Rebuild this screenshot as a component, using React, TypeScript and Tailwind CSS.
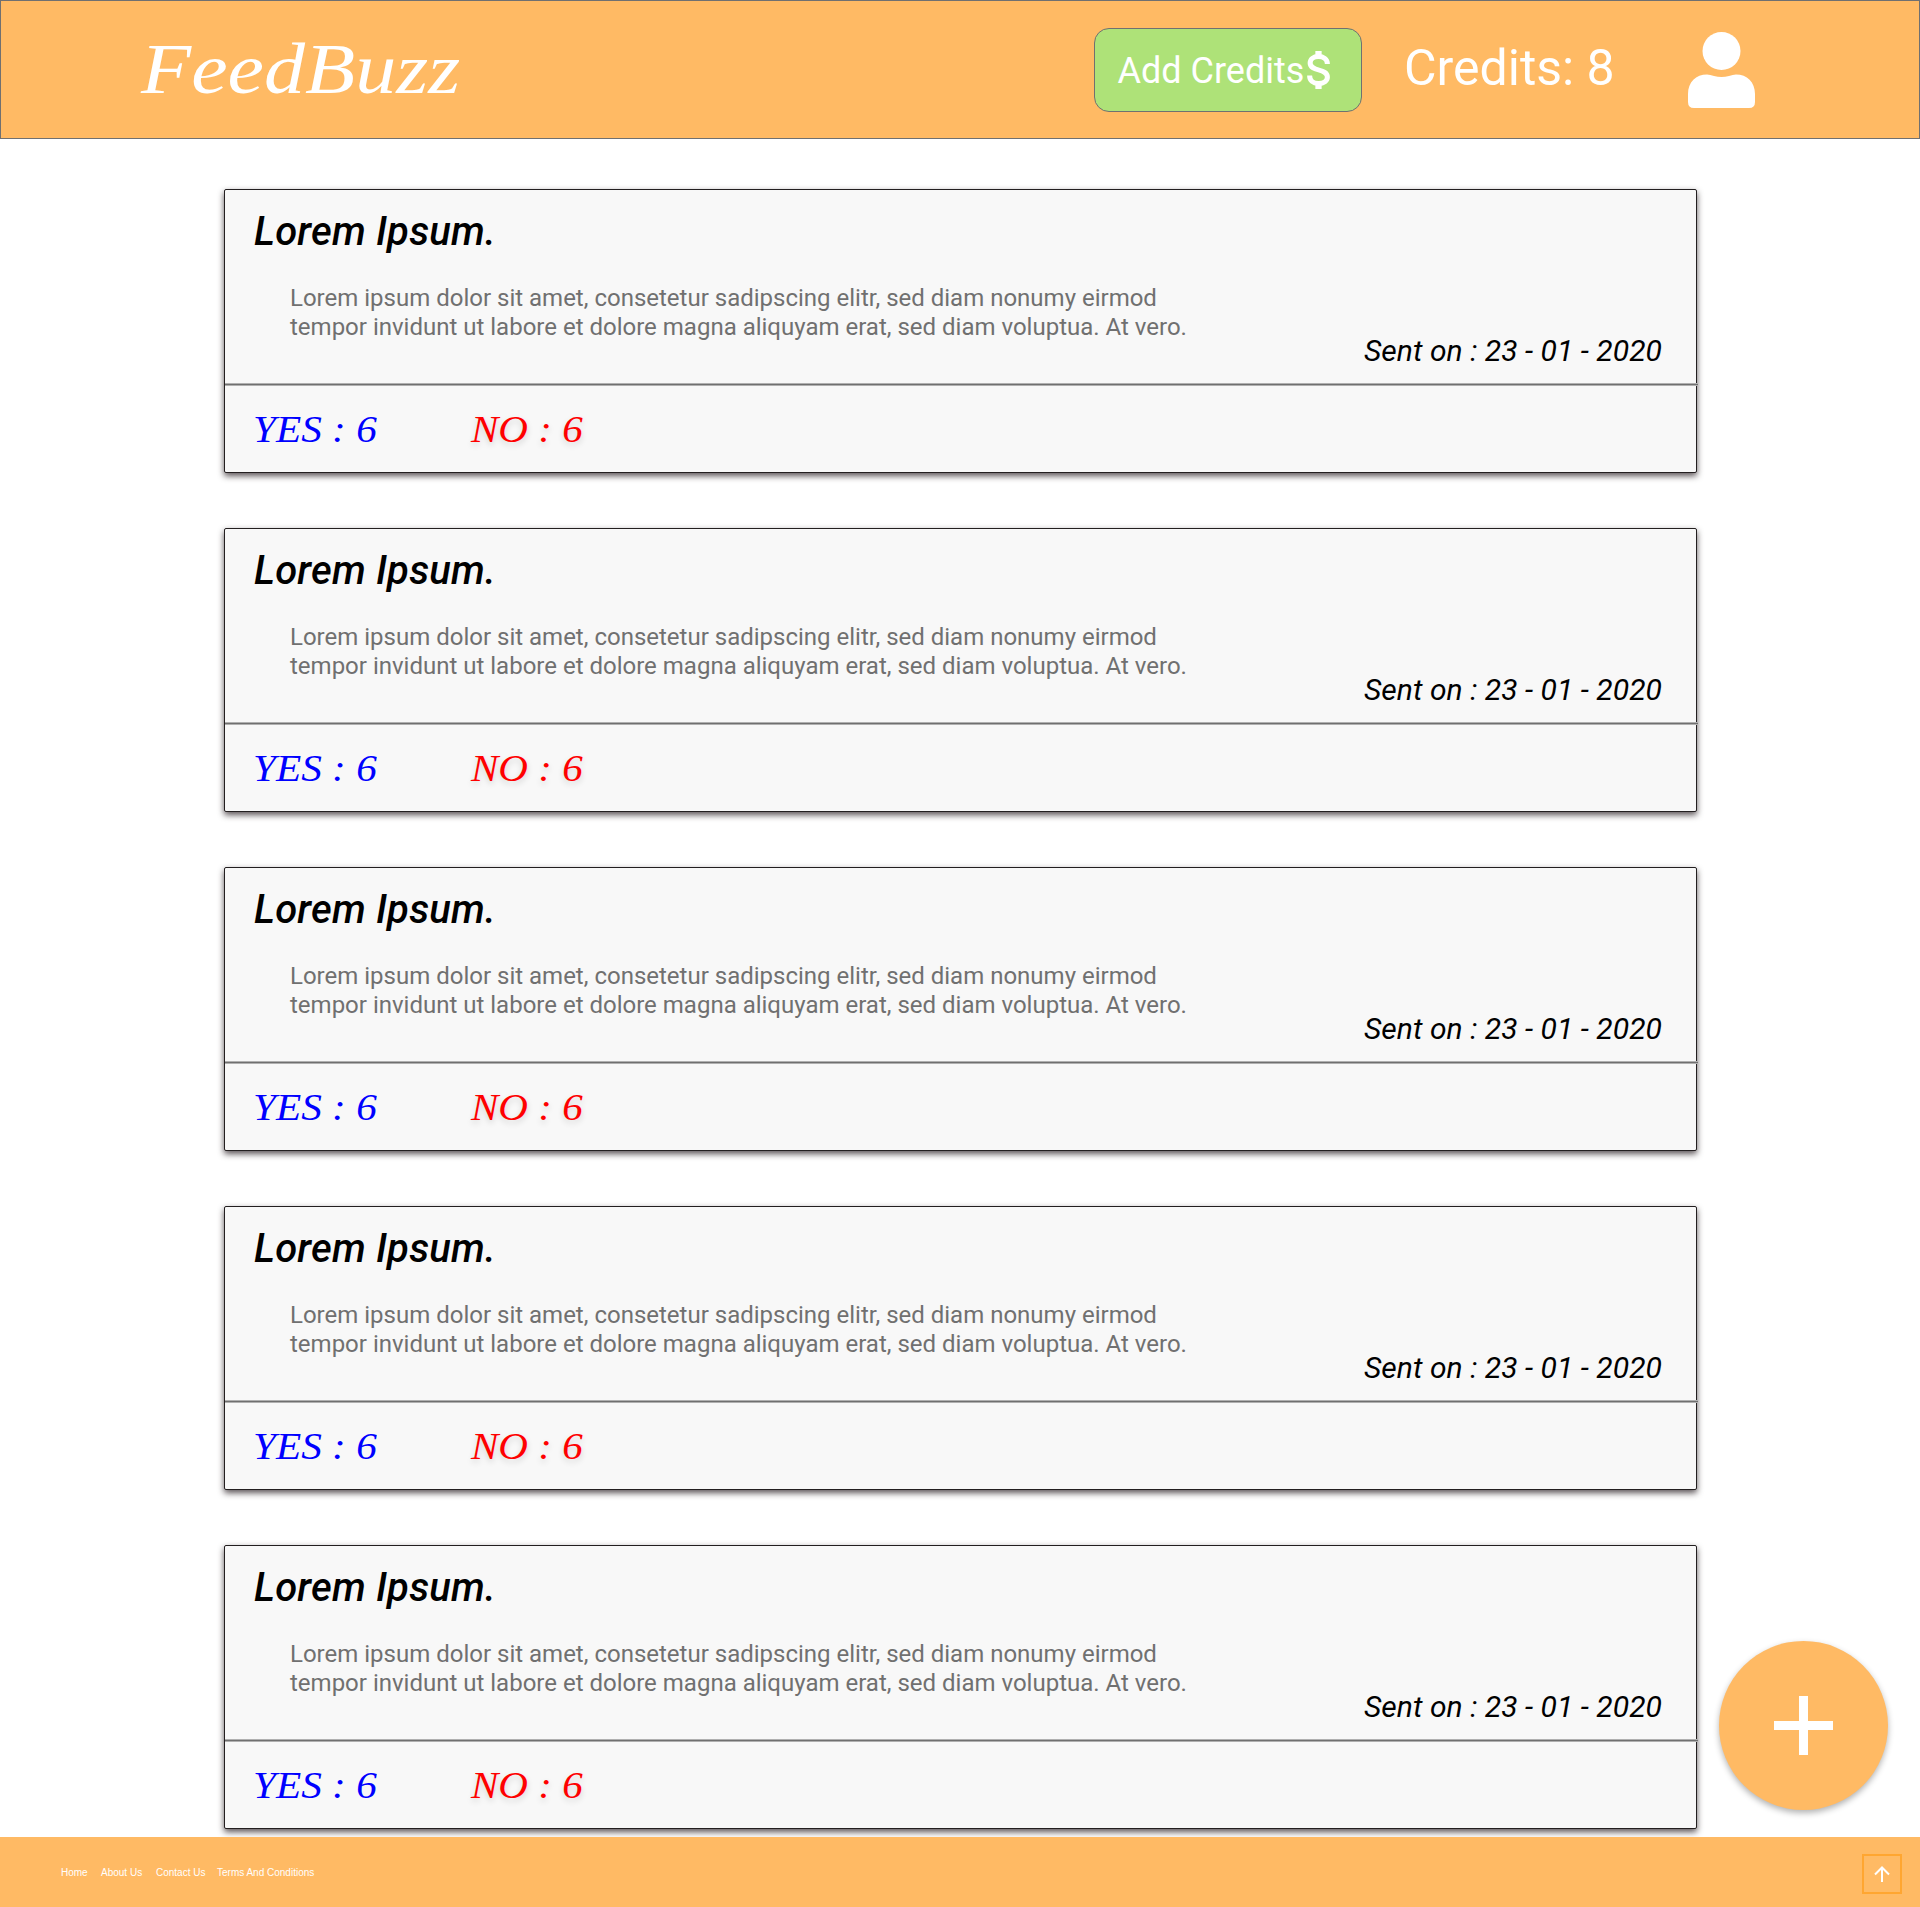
const cards = [0, 1, 2, 3, 4];

function Card() {
  return (
    <article className="relative h-[284px] w-[1473px] rounded-[2px] border border-[#231f20] bg-[#f8f8f8] shadow-[0_3px_6px_rgba(35,25,30,0.75)]">
      <div className="flex h-[197px] flex-col">
        <h2 className="mt-[18px] ml-[29px] text-[40px] leading-[47px] font-medium tracking-[0.2px] italic text-black">Lorem Ipsum.</h2>
        <p className="mt-[29px] ml-[65px] text-[24px] leading-[29px] whitespace-nowrap text-[#707070]">
          Lorem ipsum dolor sit amet, consetetur sadipscing elitr, sed diam nonumy eirmod
          <br />
          tempor invidunt ut labore et dolore magna aliquyam erat, sed diam voluptua. At vero.
        </p>
        <p className="-mt-[9px] mr-[34px] self-end text-[30px] leading-[36px] tracking-[0.06px] whitespace-nowrap italic text-black">Sent on : 23 - 01 - 2020</p>
      </div>
      <div className="-mt-[4px] -mr-[2px] h-[3px] border-y border-[#b0b0b0] bg-[#707070]" />
      <div className="flex pt-[21px] pl-[28px] text-[38px] leading-[44px] whitespace-nowrap italic [font-family:'Liberation_Serif',serif]">
        <div className="w-[218px]">
          <span className="inline-block origin-left scale-x-[1.086] text-[#0000ff]">YES : 6</span>
        </div>
        <span className="inline-block origin-left scale-x-[1.08] text-[#ff0000] [text-shadow:0_3px_6px_rgba(0,0,0,0.16)]">NO : 6</span>
      </div>
    </article>
  );
}

export default function App() {
  return (
    <div className="relative flex h-[1907px] w-[1920px] flex-col overflow-hidden bg-white [font-family:Roboto,sans-serif]">
      <header className="flex h-[139px] shrink-0 items-start border border-[#707070] bg-[#ffba64] text-white">
        <h1 className="mt-[27px] ml-[140px] w-[952.5px] text-[72px] leading-[82px] italic [font-family:'Liberation_Serif',serif]">
          <span className="inline-block origin-left scale-x-[1.14]">FeedBuzz</span>
        </h1>
        <button className="mt-[27px] flex h-[84px] w-[268px] shrink-0 rounded-[15px] border border-[#707070] bg-[#aee278] pl-[23px] text-[36px]">
          <span className="mt-[20px] leading-[44px]">Add Credits</span>
          <svg className="mt-[22px] ml-[3px] h-[38px] w-[23px]" viewBox="0 0 22 38" fill="none" stroke="currentColor" preserveAspectRatio="none">
            <path d="M11 0v7M11 31v7" strokeWidth="6" />
            <path d="M19.500 13c0-5-4-7.500-8.500-7.500-5 0-8 2.500-8 6.500 0 9 16.500 5 16.500 14 0 4-3.500 6.500-8.500 6.500S2.500 30 2.500 24.500" strokeWidth="4.800" />
          </svg>
        </button>
        <span className="mt-[37px] ml-[42.5px] w-[284px] text-[50px] leading-[60px] whitespace-nowrap">Credits: 8</span>
        <svg className="mt-[31px] h-[76px] w-[67px]" viewBox="0 0 67 76" fill="currentColor">
          <circle cx="33.5" cy="19" r="19" />
          <path d="M0 62C0 50 8 42.500 19 42.500q3 0 7 1.500 7.500 2 15 0 4-1.500 7-1.500c11 0 19 7.500 19 19.500v8q0 6-6 6H6q-6 0-6-6Z" />
        </svg>
      </header>
      <main className="flex flex-col gap-[55px] pt-[50px] pl-[224px]">
        {cards.map((c) => (
          <Card key={c} />
        ))}
      </main>
      <footer className="absolute bottom-0 left-0 flex h-[70px] w-full items-start bg-[#ffba64] text-[10px] text-white [font-family:'Liberation_Sans',sans-serif]">
        <nav className="mt-[30px] ml-[61px] flex leading-[12px] whitespace-nowrap">
          <a className="w-[40px]">Home</a>
          <a className="w-[55px]">About Us</a>
          <a className="w-[61px]">Contact Us</a>
          <a>Terms And Conditions</a>
        </nav>
        <button className="mt-[17px] mr-[18px] ml-auto flex h-[40px] w-[40px] items-center justify-center border-2 border-[#ffa631]">
          <svg className="h-[16px] w-[16px]" viewBox="0 0 16 16" fill="none" stroke="currentColor" strokeWidth="2">
            <path d="M8 16V1.500M1 8.500 8 1.500l7 7" />
          </svg>
        </button>
      </footer>
      <button className="absolute top-[1640.5px] left-[1718.5px] flex h-[169.5px] w-[169.5px] items-center justify-center rounded-full bg-[#ffba64] text-white shadow-[0_3px_6px_rgba(0,0,0,0.3)]">
        <svg className="h-[59px] w-[59px]" viewBox="0 0 59 59" stroke="currentColor" strokeWidth="9">
          <path d="M29.500 0v59M0 29.500h59" />
        </svg>
      </button>
    </div>
  );
}
